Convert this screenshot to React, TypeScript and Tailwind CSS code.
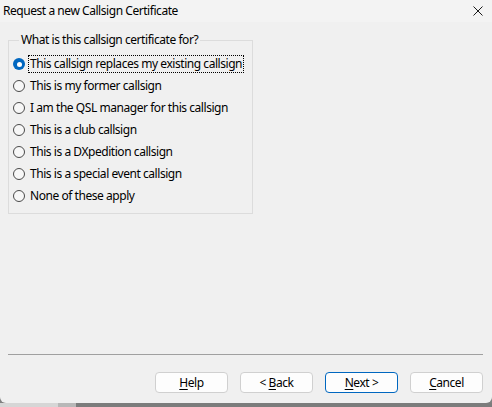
import { useState } from 'react';

const options = [
  'This callsign replaces my existing callsign',
  'This is my former callsign',
  'I am the QSL manager for this callsign',
  'This is a club callsign',
  'This is a DXpedition callsign',
  'This is a special event callsign',
  'None of these apply',
];

function Radio({ checked }: { checked: boolean }) {
  return checked ? (
    <span className="w-[12px] h-[12px] rounded-full bg-[#0067c0] flex items-center justify-center shrink-0">
      <span className="w-[5px] h-[5px] rounded-full bg-white" />
    </span>
  ) : (
    <span className="w-[12px] h-[12px] rounded-full border border-[#4a4a4a] bg-[#f7f7f7] shrink-0" />
  );
}

function WizButton({ pre, mn, rest, primary }: { pre?: string; mn: string; rest: string; primary?: boolean }) {
  return (
    <button
      className={`w-[73px] h-[21px] rounded-[4px] bg-[#fdfdfd] border text-[12px] leading-none text-black whitespace-pre ${
        primary ? 'border-[#0067c0]' : 'border-[#d0d0d0]'
      }`}
    >
      {pre}
      <span className="underline underline-offset-2">{mn}</span>
      {rest}
    </button>
  );
}

export default function App() {
  const [choice, setChoice] = useState(0);

  return (
    <div className="w-[492px] h-[407px] flex flex-col bg-[#808080] font-['Noto_Sans',sans-serif] tracking-[-0.45px] text-black overflow-hidden">
      <div className="flex-1 flex flex-col bg-[#f0f0f0] rounded-b-[6px]">
        {/* Title bar */}
        <div className="h-[22px] bg-[#f3f3f3] flex items-center justify-between pl-[3px] pr-[8px]">
          <span className="text-[12px] whitespace-nowrap">Request a new Callsign Certificate</span>
          <svg width="10" height="10" viewBox="0 0 10 10" className="mr-[1px]">
            <path d="M0.5 0.5 L9.5 9.5 M9.5 0.5 L0.5 9.5" stroke="#1a1a1a" strokeWidth="1" />
          </svg>
        </div>

        {/* Group box */}
        <fieldset className="mt-[10px] ml-[8px] w-[245px] h-[182px] border border-[#dcdcdc] pl-[4px] pr-[4px] pt-[5px]">
          <legend className="text-[12px] leading-[16px] px-[2px] ml-[6px] whitespace-nowrap">What is this callsign certificate for?</legend>
          <div className="flex flex-col">
            {options.map((opt, i) => (
              <label key={i} className="h-[22px] flex items-center gap-[4px] cursor-default" onClick={() => setChoice(i)}>
                <Radio checked={choice === i} />
                <span
                  className={`text-[12px] leading-[16px] px-[1px] whitespace-nowrap ${
                    i === 0 ? 'outline outline-1 outline-dotted outline-black' : ''
                  }`}
                >
                  {opt}
                </span>
              </label>
            ))}
          </div>
        </fieldset>

        <div className="flex-1" />

        {/* Separator */}
        <div className="ml-[8px] mr-[9px] h-[1px] bg-[#a0a0a0]" />

        {/* Buttons */}
        <div className="flex justify-end gap-[12px] mr-[9px] mt-[17px] mb-[10px]">
          <WizButton mn="H" rest="elp" />
          <WizButton pre="< " mn="B" rest="ack" />
          <WizButton mn="N" rest="ext >" primary />
          <WizButton mn="C" rest="ancel" />
        </div>
      </div>
      <div className="h-[4px] flex">
        <div className="w-[58px] bg-[#d6d6d6]" />
        <div className="w-[18px] bg-[#b8b8b8]" />
        <div className="flex-1 bg-[#7c7c7c]" />
      </div>
    </div>
  );
}
